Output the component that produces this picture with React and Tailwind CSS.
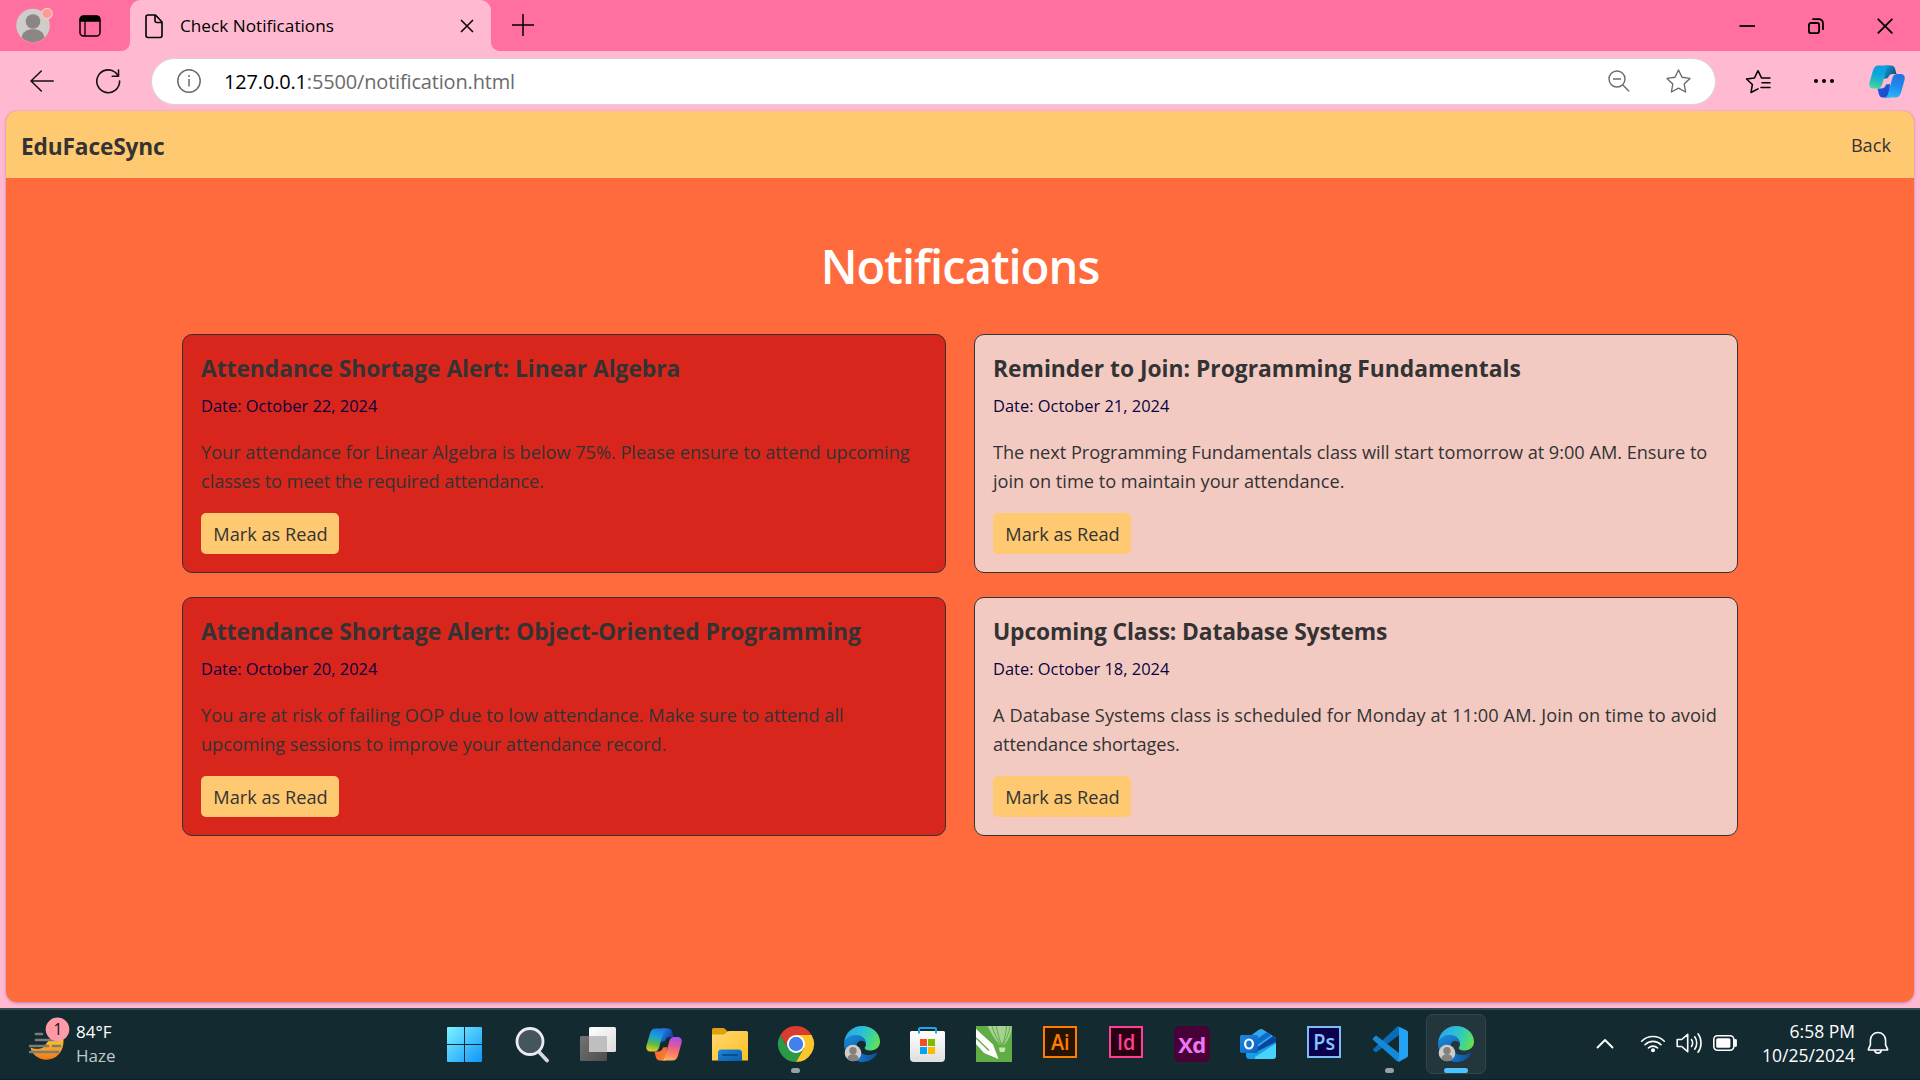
const TASK_ICON = "block h-9 w-9 overflow-visible";

function CopilotIcon({ id, className, colors }) {
  return (
    <svg viewBox="0 0 36 33" className={className}>
      <defs>
        <linearGradient id={id + "a"} x1="0.5" y1="0" x2="0.3" y2="1">
          {colors.left.map((c, i) => <stop key={c} offset={i / (colors.left.length - 1)} stopColor={c} />)}
        </linearGradient>
        <linearGradient id={id + "b"} x1="0.6" y1="0" x2="0.4" y2="1">
          {colors.right.map((c, i) => <stop key={c} offset={i / (colors.right.length - 1)} stopColor={c} />)}
        </linearGradient>
        <linearGradient id={id + "c"} x1="0" y1="0" x2="1" y2="0.6">
          <stop offset="0" stopColor={colors.top[0]} />
          <stop offset="1" stopColor={colors.top[1]} />
        </linearGradient>
        <linearGradient id={id + "d"} x1="0" y1="0" x2="1" y2="1">
          <stop offset="0" stopColor={colors.bottom[0]} />
          <stop offset="1" stopColor={colors.bottom[1]} />
        </linearGradient>
      </defs>
      <path d="M16 .5h6c2.600 0 3.600 1.600 4.300 4l1.200 4.500h-3.500c-2.800 0-4.200 1.200-5 4L15 14z" fill={`url(#${id}c)`} />
      <path d="M20 32.500h-6c-2.600 0-3.600-1.600-4.300-4l-1.200-5h3.500c2.800 0 4.200-1.200 5-4L21 19z" fill={`url(#${id}d)`} />
      <path d="M9.500.5h12.300c-2.700 0-3.900 1.900-4.900 5.300l-3.500 12.700c-.9 3.400-2.200 5-5.300 5H4.300C.8 23.500-.3 20.800.5 17.600L3.800 6C4.900 2.300 6.600.5 9.500.5z" fill={`url(#${id}a)`} />
      <path d="M26.500 32.500H14.700c2.600 0 3.800-1.900 4.800-5.300L23 14.300c.9-3.400 2.100-5.300 5.200-5.300h3.500c3.500 0 4.600 2.700 3.800 5.900L32.200 27c-1.100 3.700-2.800 5.500-5.700 5.500z" fill={`url(#${id}b)`} />
    </svg>
  );
}

function EdgeIcon({ id }) {
  return (
    <svg viewBox="0 0 36 36" className={TASK_ICON}>
      <defs>
        <linearGradient id={id + "a"} x1="0" y1="0.3" x2="1" y2="0.6">
          <stop offset="0" stopColor="#2aa5e8" />
          <stop offset="0.45" stopColor="#2cc0d4" />
          <stop offset="0.75" stopColor="#3fd49a" />
          <stop offset="1" stopColor="#66e04e" />
        </linearGradient>
        <linearGradient id={id + "b"} x1="0" y1="0" x2="0.4" y2="1">
          <stop offset="0" stopColor="#1d8ddb" />
          <stop offset="1" stopColor="#0c59a8" />
        </linearGradient>
        <linearGradient id={id + "c"} x1="0" y1="0" x2="1" y2="0">
          <stop offset="0" stopColor="#1580d8" />
          <stop offset="1" stopColor="#104a94" />
        </linearGradient>
      </defs>
      <path d="M.2 16.500C.9 7 8.400 0 18 0c10.500 0 18 7.600 18 15.500 0 5.400-4 9-9.200 9-4.400 0-6.100-1.600-6.100-2.600 0-.8 1.300-1.300 1.300-4C22 13.600 18 9.500 12 9.500c-5.600 0-10 3-11.800 7z" fill={`url(#${id}a)`} />
      <path d="M.1 17C1.500 12.500 6 9 12 9c6.500 0 10.200 4.700 10 9-1-2.300-3-3.500-5.200-3.300-3 .3-5 3.300-4.300 7.300.8 5 5 10.500 11 12.500C12 38.300 0 30.500 0 18z" fill={`url(#${id}b)`} />
      <path d="M12.600 19c-.4 4.500 4.300 10.300 11.700 10 4-.2 6.700-1.700 8.300-2.300.7-.2 1 .2.600.9-2.500 4.500-7.500 8.400-14.800 8.400C12 36 8.200 31 8.600 26c.2-3 1.600-5.600 4-7z" fill={`url(#${id}c)`} />
      <circle cx="9" cy="27" r="8.300" fill="#cfccc9" />
      <circle cx="9" cy="24.700" r="3.700" fill="#85817e" />
      <path d="M3.300 32.800c.5-3.400 3-4.500 5.700-4.500s5.200 1.100 5.700 4.500c-3.400 3.200-8 3.200-11.400 0z" fill="#85817e" />
    </svg>
  );
}

function AdobeTile({ label, box, text }) {
  return (
    <div className={"-mt-1 flex h-8 w-[34px] items-center justify-center border-2 font-['Open_Sans','Noto_Sans',sans-serif] text-[22px] leading-none font-semibold " + box}>
      <span className={"-translate-y-px scale-x-90 " + text}>{label}</span>
    </div>
  );
}

function TaskCell({ children, running, active }) {
  return (
    <div className="relative flex h-[60px] w-[66px] items-center justify-center">
      <div className={"flex h-[60px] w-[60px] items-center justify-center rounded-md " + (active ? "border border-[#32474d] bg-[#22363c]" : "")}>{children}</div>
      {running && <span className="absolute bottom-px left-7 h-[5px] w-[9px] rounded-full bg-[#97a1a4]" />}
      {active && <span className="absolute bottom-px left-[21px] h-[5px] w-6 rounded-full bg-[#4cc2ff]" />}
    </div>
  );
}

function TabStrip() {
  return (
    <div className="flex h-[51px] bg-[#ff6f9f]">
      <div className="flex w-[130px] items-center pl-4">
        <svg viewBox="0 0 38 38" className="-mt-[3px] h-[38px] w-[38px]">
          <circle cx="17" cy="20.500" r="16.800" fill="#cfcdca" />
          <circle cx="17" cy="16.500" r="7.300" fill="#8a8684" />
          <path d="M5.500 32.500c1.200-6 5.500-8.300 11.500-8.300s10.300 2.300 11.500 8.300C22 38.700 12 38.700 5.500 32.500z" fill="#8a8684" />
          <circle cx="31" cy="8.600" r="5.200" fill="#ff9b93" stroke="#f3cdd0" strokeWidth="1.200" />
        </svg>
        <svg viewBox="0 0 22 22" className="ml-[25px] h-[22px] w-[22px]" fill="none" stroke="#000" strokeWidth="1.500">
          <rect x="1" y="1" width="20" height="20" rx="3.500" />
          <path d="M1.500 6V4A2.500 2.500 0 0 1 4 1.500h14A2.500 2.500 0 0 1 20.500 4v2z" fill="#000" />
          <path d="M6 6v15" strokeWidth="1.300" />
        </svg>
      </div>
      <div className="relative flex w-[361px] items-center rounded-t-[11px] bg-[#ffbad1]">
        <span className="absolute bottom-0 -left-[9px] h-[9px] w-[9px] bg-[radial-gradient(circle_at_0_0,transparent_8.500px,#ffbad1_9.500px)]" />
        <span className="absolute -right-[9px] bottom-0 h-[9px] w-[9px] bg-[radial-gradient(circle_at_100%_0,transparent_8.500px,#ffbad1_9.500px)]" />
        <svg viewBox="0 0 20 26" className="ml-[14px] h-[26px] w-5" fill="none" stroke="#000" strokeWidth="1.600" strokeLinejoin="round">
          <path d="M4 2h7.500l6.500 7v13.500a2 2 0 0 1-2 2H4a2 2 0 0 1-2-2V4a2 2 0 0 1 2-2z" />
          <path d="M11 2v5.500a2 2 0 0 0 2 2h5" />
        </svg>
        <span className="ml-4 text-[17.200px] whitespace-nowrap text-black">Check Notifications</span>
        <svg viewBox="0 0 14 14" className="mt-px mr-[17px] ml-auto h-[14px] w-[14px]" stroke="#000" strokeWidth="1.500">
          <path d="M1 1l12 12M13 1L1 13" />
        </svg>
      </div>
      <svg viewBox="0 0 22 22" className="mt-[14px] ml-[21px] h-[22px] w-[22px]" stroke="#000" strokeWidth="1.500">
        <path d="M11 0v22M0 11h22" />
      </svg>
      <div className="mr-[27px] ml-auto flex items-center">
        <svg viewBox="0 0 16 16" className="h-4 w-4" stroke="#000" strokeWidth="1.800"><path d="M.5 8H16" /></svg>
        <svg viewBox="0 0 16 16" className="ml-[53px] h-4 w-4" fill="none" stroke="#000" strokeWidth="1.800">
          <rect x="0.900" y="5" width="10.200" height="10.200" rx="2" />
          <path d="M5 1.200h6a4 4 0 0 1 4 4v6" strokeLinecap="round" />
        </svg>
        <svg viewBox="0 0 16 16" className="ml-[53px] h-4 w-4" stroke="#000" strokeWidth="1.800"><path d="M.8.8l14.600 14.600M15.400.8L.8 15.400" /></svg>
      </div>
    </div>
  );
}

function Toolbar() {
  return (
    <div className="flex h-[60px] items-center bg-[#ffbad1]">
      <svg viewBox="0 0 24 22" className="ml-[30px] h-[22px] w-6" fill="none" stroke="#111" strokeWidth="1.500" strokeLinecap="round" strokeLinejoin="round">
        <path d="M23.300 11H1M11.300 1L1 11l10.300 10" />
      </svg>
      <svg viewBox="0 0 26 26" className="ml-[41px] h-[26px] w-[26px]" fill="none" stroke="#111" strokeWidth="1.600" strokeLinecap="round" strokeLinejoin="round">
        <path d="M24.600 13A11.400 11.400 0 1 1 20.500 4.500L23 7.500" />
        <path d="M23.500 2v6.200h-6.300" />
      </svg>
      <div className="ml-[30px] flex h-[47px] w-[1565px] items-center rounded-full border border-[#d9d3d6] bg-white pr-6 pl-[25px]">
        <svg viewBox="0 0 24 24" className="h-6 w-6" fill="none" stroke="#6b6b6b" strokeWidth="1.500">
          <circle cx="12" cy="12" r="11.200" />
          <path d="M12 10v7.500" />
          <circle cx="12" cy="7" r="1" fill="#6b6b6b" stroke="none" />
        </svg>
        <span className="mt-0.5 ml-[23px] text-xl tracking-[-0.170px] whitespace-nowrap text-[#6b6b6b]">
          <span className="text-black">127.0.0.1</span>:5500/notification.html
        </span>
        <svg viewBox="0 0 22 22" className="ml-auto h-[22px] w-[22px]" fill="none" stroke="#6b6b6b" strokeWidth="1.400">
          <circle cx="9" cy="9" r="8" />
          <path d="M14.700 14.700l6.300 6.500M5 9h8" />
        </svg>
        <svg viewBox="0 0 25 24" className="ml-9 h-6 w-[25px]" fill="none" stroke="#6b6b6b" strokeWidth="1.400" strokeLinejoin="round">
          <path d="M12.500 1l3.500 7.300 8 1.100-5.800 5.600 1.400 8-7.100-3.800L5.400 23l1.400-8L1 9.400l8-1.100z" />
        </svg>
      </div>
      <svg viewBox="0 0 26 25" className="ml-[29px] h-[25px] w-[26px]" fill="none" stroke="#000" strokeWidth="1.500" strokeLinejoin="round" strokeLinecap="round">
        <path d="M13 19.800L6 23.500l1.400-8L1.500 10l8-1.100L13 1.700l3.500 7.200H25" />
        <path d="M17 13.700h8M16 18.500h9" />
      </svg>
      <svg viewBox="0 0 22 6" className="ml-[42px] h-[6px] w-[22px]"><circle cx="3" cy="3" r="2" /><circle cx="11" cy="3" r="2" /><circle cx="19" cy="3" r="2" /></svg>
      <CopilotIcon id="cpa" className="ml-[34px] h-[33px] w-9" colors={{ left: ["#0f9fdc", "#0aa4e0", "#22b9c4", "#4bd796"], right: ["#2a70dc", "#1b8cf0", "#2ab6f6"], top: ["#12a0d8", "#0d4f80"], bottom: ["#1b63dc", "#1746c8"] }} />
    </div>
  );
}

const NOTICES = [
  {
    title: "Attendance Shortage Alert: Linear Algebra", titleTrack: "tracking-[-0.040px]", date: "October 22, 2024", alert: true,
    lines: [
      { text: "Your attendance for Linear Algebra is below 75%. Please ensure to attend upcoming", track: "tracking-[-0.020px]" },
      { text: "classes to meet the required attendance.", track: "tracking-[-0.080px]" },
    ],
  },
  {
    title: "Reminder to Join: Programming Fundamentals", titleTrack: "", date: "October 21, 2024",
    lines: [
      { text: "The next Programming Fundamentals class will start tomorrow at 9:00 AM. Ensure to", track: "tracking-[-0.030px]" },
      { text: "join on time to maintain your attendance.", track: "" },
    ],
  },
  {
    title: "Attendance Shortage Alert: Object-Oriented Programming", titleTrack: "", date: "October 20, 2024", alert: true, lower: true,
    lines: [
      { text: "You are at risk of failing OOP due to low attendance. Make sure to attend all", track: "tracking-[0.020px]" },
      { text: "upcoming sessions to improve your attendance record.", track: "tracking-[-0.030px]" },
    ],
  },
  {
    title: "Upcoming Class: Database Systems", titleTrack: "tracking-[-0.120px]", date: "October 18, 2024", lower: true,
    lines: [
      { text: "A Database Systems class is scheduled for Monday at 11:00 AM. Join on time to avoid", track: "tracking-[0.080px]" },
      { text: "attendance shortages.", track: "tracking-[-0.100px]" },
    ],
  },
];

function NoticeCard({ notice }) {
  return (
    <article className={"h-[239px] rounded-[10px] border border-[#333] pt-[19px] pr-[19px] pl-[18px] " + (notice.alert ? "bg-[#d9261c]" : "bg-[#f2cac2]")}>
      <h2 className={"text-[22.800px] leading-[29px] font-bold whitespace-nowrap text-[#333] " + notice.titleTrack}>{notice.title}</h2>
      <p className="mt-[10px] text-[16.450px] leading-[26px] text-[#0a0340]">Date: {notice.date}</p>
      <p className={"mt-[19px] text-[18.200px] whitespace-nowrap text-[#333] " + (notice.lower ? "leading-[29px]" : "leading-[28.500px]")}>
        {notice.lines.map((l) => <span key={l.text} className={"block " + l.track}>{l.text}</span>)}
      </p>
      <button className={"flex h-[41px] w-[138px] items-center justify-center rounded-[5px] bg-[#ffc971] pt-0.5 pl-px text-[18.200px] text-[#333] " + (notice.lower ? "mt-[17px]" : "mt-[18px]")}>Mark as Read</button>
    </article>
  );
}

function Page() {
  return (
    <div className="flex h-[897px] bg-[#ffbad1] px-[6px]">
      <div className="h-[891px] flex-1 overflow-hidden rounded-[11px] bg-[#ff6b3d] shadow-[0_1px_3px_rgba(120,80,140,0.5)]">
        <nav className="flex h-[67px] items-center justify-between bg-[#ffc971] pr-6 pl-[15px] text-[#333]">
          <span className="mt-[5px] text-[22.700px] tracking-[-0.150px] font-bold">EduFaceSync</span>
          <span className="mt-0.5 -mr-px text-[18.200px]">Back</span>
        </nav>
        <main className="flex flex-col items-center pt-[58px]">
          <h1 className="text-[47px] leading-[60px] font-semibold tracking-[-0.950px] text-white">Notifications</h1>
          <div className="mt-[38px] grid grid-cols-[764px_764px] gap-x-7 gap-y-6">
            {NOTICES.map((n) => <NoticeCard key={n.title} notice={n} />)}
          </div>
        </main>
      </div>
    </div>
  );
}

function Taskbar() {
  return (
    <div className="flex h-[72px] border-t-2 border-b border-t-[#364a4f] border-b-[#101c33] bg-[#122a30]">
      <div className="flex w-[433px] pl-[29px]">
        <svg viewBox="0 0 48 46" className="mt-[6px] h-[46px] w-12 shrink-0">
          <defs>
            <linearGradient id="sun" x1="0" y1="0" x2="0" y2="1">
              <stop offset="0" stopColor="#fcc52c" />
              <stop offset="1" stopColor="#f07818" />
            </linearGradient>
          </defs>
          <path d="M34.500 23.500c.7 12-7 20.200-17 20.200-8.200 0-15-5.700-16-12.200 4 2 10 1.600 12.500 0l6.500-8z" fill="url(#sun)" />
          <path d="M7 18h6M7 24h22M1 30h18M24 30h7M1 36h28" stroke="#7d7b7a" strokeWidth="2.700" strokeLinecap="round" />
          <circle cx="28.500" cy="13.300" r="11.800" fill="#ff9aa6" />
          <text x="29" y="19" fontSize="15.500" textAnchor="middle" fill="#111">1</text>
        </svg>
        <div className="-ml-[1px] mt-[10px] text-[17px] leading-6">
          <div className="text-white">84°F</div>
          <div className="text-[#c3c9cb]">Haze</div>
        </div>
      </div>
      <div className="mt-1 flex">
        <TaskCell>
          <svg viewBox="0 0 36 36" className={TASK_ICON}>
            <defs><linearGradient id="win" x1="0" y1="0" x2="36" y2="36" gradientUnits="userSpaceOnUse"><stop offset="0" stopColor="#7cf3ff" /><stop offset="1" stopColor="#0b93fa" /></linearGradient></defs>
            <g fill="url(#win)" transform="translate(-1 1)"><path d="M1 0h16v17H0V1a1 1 0 0 1 1-1z" /><path d="M18 0h16a1 1 0 0 1 1 1v16H18z" /><path d="M0 18h17v17H1a1 1 0 0 1-1-1z" /><path d="M18 18h17v16a1 1 0 0 1-1 1H18z" /></g>
          </svg>
        </TaskCell>
        <TaskCell>
          <svg viewBox="0 0 36 36" className={TASK_ICON}>
            <path d="M25.500 26.500l7.500 8" stroke="#d4d8e0" strokeWidth="3.800" strokeLinecap="round" />
            <circle cx="16" cy="15.500" r="13" fill="#44555c" stroke="#ecebef" strokeWidth="2.800" />
          </svg>
        </TaskCell>
        <TaskCell>
          <svg viewBox="0 0 36 36" className={TASK_ICON}>
            <defs>
              <linearGradient id="tv1" x1="0" y1="0" x2="1" y2="1"><stop offset="0" stopColor="#fff" /><stop offset="1" stopColor="#dcdcdc" /></linearGradient>
              <linearGradient id="tv2" x1="0" y1="0" x2="1" y2="1"><stop offset="0" stopColor="#747474" /><stop offset="1" stopColor="#4d4d4d" /></linearGradient>
            </defs>
            <rect x="0" y="10" width="27" height="25" rx="1.500" fill="url(#tv2)" />
            <rect x="9" y="1" width="27" height="25" rx="1.500" fill="url(#tv1)" />
            <path d="M9 10h18v16H10.500A1.500 1.500 0 0 1 9 24.500z" fill="#bfbfbf" />
          </svg>
        </TaskCell>
        <TaskCell>
          <CopilotIcon id="cpb" className="h-[33px] w-9" colors={{ left: ["#1d78e0", "#18a0dc", "#58b84e", "#e8cf14"], right: ["#a850f0", "#e0569c", "#ff7a66", "#ffb066"], top: ["#2090e8", "#1436a8"], bottom: ["#ff5a3c", "#f08a28"] }} />
        </TaskCell>
        <TaskCell>
          <svg viewBox="0 0 36 36" className={TASK_ICON}>
            <defs>
              <linearGradient id="fo" x1="0" y1="0" x2="1" y2="1"><stop offset="0" stopColor="#ffd873" /><stop offset="1" stopColor="#fcc021" /></linearGradient>
              <linearGradient id="fb" x1="0" y1="0" x2="1" y2="1"><stop offset="0" stopColor="#1787dc" /><stop offset="1" stopColor="#0f5ca8" /></linearGradient>
            </defs>
            <path d="M0 3.500A1.500 1.500 0 0 1 1.500 2H11c1 0 1.600.4 2.200 1l2.800 3v6H0z" fill="#dfa00c" />
            <path d="M0 8.500h11c1 0 1.600-.4 2.200-1l2-1.700c.6-.5 1.200-.8 2-.8h17.300A1.500 1.500 0 0 1 36 6.500V34.500H0z" fill="url(#fo)" />
            <path d="M6 35V27a3.500 3.500 0 0 1 3.500-3.500h17A3.500 3.500 0 0 1 30 27v8z" fill="url(#fb)" />
            <path d="M11 29h14" stroke="#0b427c" strokeWidth="1.700" strokeLinecap="round" />
          </svg>
        </TaskCell>
        <TaskCell running>
          <svg viewBox="0 0 36 36" className={TASK_ICON}>
            <path d="M18 9h15.600A18 18 0 0 0 2.400 9l7.800 13.500z" fill="#dc3b30" />
            <path d="M10.200 22.500L2.400 9A18 18 0 0 0 18 36l7.800-13.500z" fill="#2a9a48" />
            <path d="M25.800 22.500L18 36A18 18 0 0 0 33.600 9H18z" fill="#fcc62a" />
            <circle cx="18" cy="18" r="9" fill="#fff" />
            <circle cx="18" cy="18" r="7.200" fill="#4280ee" />
          </svg>
        </TaskCell>
        <TaskCell><EdgeIcon id="eda" /></TaskCell>
        <TaskCell>
          <svg viewBox="0 0 36 36" className={TASK_ICON}>
            <defs><linearGradient id="st" x1="0" y1="0" x2="0" y2="1"><stop offset="0" stopColor="#fff" /><stop offset="1" stopColor="#dedede" /></linearGradient></defs>
            <path d="M0 6.500A1.500 1.500 0 0 1 1.500 5h32A1.500 1.500 0 0 1 35 6.500V32a4 4 0 0 1-4 4H4a4 4 0 0 1-4-4z" fill="url(#st)" />
            <path d="M9 7.500V3a1 1 0 0 1 1-1h15a1 1 0 0 1 1 1v4.500" fill="none" stroke="#1ba7e8" strokeWidth="2" />
            <path d="M10 13h7v7h-7z" fill="#f25022" /><path d="M18 13h7v7h-7z" fill="#7fba00" /><path d="M10 21h7v7h-7z" fill="#00a4ef" /><path d="M18 21h7v7h-7z" fill="#ffb900" />
          </svg>
        </TaskCell>
        <TaskCell>
          <svg viewBox="0 0 36 36" className={TASK_ICON}>
            <path d="M0 0h36v36H0z" fill="#60ac45" />
            <path d="M0 3l17 15.500L22.500 33 8 27 0 18z" fill="#fff" />
            <path d="M0 12l13 12.500" stroke="#60ac45" strokeWidth="1.300" />
            <path d="M11.500 0h24.200c-.2 8-3.300 14-7.200 18.500h-5C19 14 15 7 11.500 0z" fill="#a5d293" />
            <path d="M16 0c2 7 5 13 8.500 18.500M20.500 0c1 8 3 13.500 5 18.500M30.500 0c-.5 8-2 13.500-4 18.500M34 0c-1 8-4 13.500-7 18.500" stroke="#60ac45" strokeWidth="1" fill="none" />
            <path d="M23 21.500h6.500L28.500 26h-4.700z" fill="#c6e3ba" />
          </svg>
        </TaskCell>
        <TaskCell><AdobeTile label="Ai" box="border-[#ff7c00] bg-[#261300]" text="text-[#ff7c00]" /></TaskCell>
        <TaskCell><AdobeTile label="Id" box="border-[#ff3f93] bg-[#280012]" text="text-[#ff3f93]" /></TaskCell>
        <TaskCell>
          <div className="flex h-9 w-9 items-center justify-center rounded-[6px] bg-[#470137] text-[22px] leading-none font-bold tracking-[-0.500px] text-[#f075f5]">Xd</div>
        </TaskCell>
        <TaskCell>
          <svg viewBox="0 0 36 36" className={TASK_ICON}>
            <defs><linearGradient id="ol" x1="0" y1="0" x2="1" y2="1"><stop offset="0" stopColor="#1c8ae4" /><stop offset="1" stopColor="#0b60bf" /></linearGradient></defs>
            <path d="M6 13L18.500 4c1.600-1.200 3.500-1.200 5.200 0L36 12v6l-18 9-12-4z" fill="#32a7ec" />
            <path d="M10 18L27 6l4.500 3L16 20z" fill="#0b6ccc" />
            <path d="M15 23L33 10l3 2.500v7L18 29z" fill="#07469c" />
            <path d="M6 21l11 4.500L36 16v13.500a3.500 3.500 0 0 1-3.500 3.500h-23A3.500 3.500 0 0 1 6 29.500z" fill="#1b9de6" />
            <path d="M15 31l21-13.500V29.500a3.500 3.500 0 0 1-3.500 3.500H15z" fill="#47d4fa" />
            <rect x="0" y="9" width="18" height="18" rx="1.800" fill="url(#ol)" />
            <ellipse cx="9" cy="18" rx="3.900" ry="4.500" fill="none" stroke="#fff" strokeWidth="2.200" />
          </svg>
        </TaskCell>
        <TaskCell><AdobeTile label="Ps" box="border-[#7cbcf8] bg-[#0b004e]" text="text-[#83c5ff]" /></TaskCell>
        <TaskCell running>
          <svg viewBox="0 0 36 36" className={TASK_ICON}>
            <path d="M.7 23.500L3 26c.5.500 1.200.6 1.800.1L27 9V.5L25 .7z" fill="#0a6cb4" />
            <path d="M.7 12.500L3 10.200c.5-.5 1.200-.6 1.800-.1L27 27v8.500l-2-.2L.7 13.500z" fill="#1489d6" />
            <path d="M26 .2l8.800 4.200c.8.400 1.200 1 1.200 1.800v23.600c0 .8-.4 1.400-1.200 1.800L26.500 36c-.6.200-1.300 0-1.700-.4 1 .6 2.200 0 2.200-1.200V1.700C27 .6 25.600 0 24.800.6 25.200.2 25.600 0 26 .2z" fill="#25a2f2" />
          </svg>
        </TaskCell>
        <TaskCell active><EdgeIcon id="edb" /></TaskCell>
      </div>
      <div className="ml-auto flex h-[66px] items-center pr-[31px]">
        <svg viewBox="0 0 18 11" className="h-[11px] w-[18px]" fill="none" stroke="#fff" strokeWidth="1.900" strokeLinecap="round" strokeLinejoin="round"><path d="M1.500 9.500L9 2l7.500 7.500" /></svg>
        <svg viewBox="0 0 26 20" className="ml-[26px] h-5 w-[26px]" fill="none" stroke="#fff" strokeWidth="1.600" strokeLinecap="round">
          <path d="M1.700 8.200a16 16 0 0 1 22.600 0M5 11.700a11.300 11.300 0 0 1 16 0M8.400 15a6.500 6.500 0 0 1 9.200 0" />
          <circle cx="13" cy="17.300" r="2" fill="#fff" stroke="none" />
        </svg>
        <svg viewBox="0 0 26 22" className="ml-[10px] h-[22px] w-[26px]" fill="none" stroke="#fff" strokeWidth="1.600" strokeLinecap="round" strokeLinejoin="round">
          <path d="M1.200 7.500v7h4.500l6 5.200V2.300l-6 5.200z" />
          <path d="M15.500 7.500c1.300 2 1.300 5 0 7M18.700 4.800c2.700 3.500 2.700 8.900 0 12.400M22 1.800c4 5 4 13.400 0 18.400" />
        </svg>
        <svg viewBox="0 0 26 18" className="ml-[10px] h-[18px] w-[26px]" fill="none" stroke="#fff" strokeWidth="1.600">
          <rect x="1.800" y="1.800" width="20" height="14.400" rx="3.600" />
          <rect x="4.200" y="4.300" width="14.200" height="9.400" rx="1.500" fill="#fff" stroke="none" />
          <path d="M23.500 6.500v5" strokeWidth="2.800" strokeLinecap="round" />
        </svg>
        <div className="-mt-px ml-[23px] w-[94px] text-right text-[17.500px] leading-6 whitespace-nowrap text-white">
          <div>6:58 PM</div>
          <div>10/25/2024</div>
        </div>
        <svg viewBox="0 0 22 24" className="ml-3 h-6 w-[22px]" fill="none" stroke="#fff" strokeWidth="1.600" strokeLinecap="round" strokeLinejoin="round">
          <path d="M11 1.500a7.600 7.600 0 0 1 7.600 7.600v4.700l2 4.400c.2.500 0 .8-.5.800H1.900c-.5 0-.7-.3-.5-.8l2-4.400V9.100A7.600 7.600 0 0 1 11 1.500z" />
          <path d="M7.700 19.500a3.400 3.400 0 0 0 6.600 0" />
        </svg>
      </div>
    </div>
  );
}

export default function App() {
  return (
    <div className="flex h-[1080px] w-[1920px] flex-col overflow-hidden font-['Open_Sans','Noto_Sans',sans-serif]">
      <TabStrip />
      <Toolbar />
      <Page />
      <Taskbar />
    </div>
  );
}
